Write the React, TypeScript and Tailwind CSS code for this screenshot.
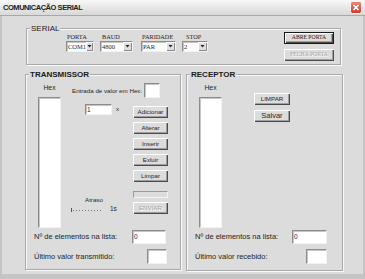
import type { ReactNode } from 'react';

const etched = 'border border-[#a9a9a9] shadow-[inset_1px_1px_0_#fafafa,1px_1px_0_#fafafa]';
const sunken =
  'bg-white border border-t-[#8c8c8c] border-l-[#8c8c8c] border-r-[#f2f2f2] border-b-[#f2f2f2] shadow-[inset_1px_1px_0_#c6c6c6]';
const raised = 'shadow-[inset_1px_1px_0_#ffffff,inset_-1px_-1px_0_#4a4a4a,inset_-2px_-2px_0_#a0a0a0]';

function Btn({
  children,
  className = '',
  disabled = false,
  isDefault = false,
}: {
  children: ReactNode;
  className?: string;
  disabled?: boolean;
  isDefault?: boolean;
}) {
  return (
    <button
      type="button"
      className={`flex items-center justify-center bg-[#dcdcdc] leading-none ${raised} ${
        isDefault ? 'border border-[#1a1a1a]' : ''
      } ${disabled ? 'text-[#a6a6a6] [text-shadow:1px_1px_0_#ffffff]' : 'text-[#1e1e1e]'} ${className}`}
    >
      {children}
    </button>
  );
}

function Combo({ value, w }: { value: string; w: string }) {
  return (
    <div className={`flex h-[11px] ${w} ${sunken}`}>
      <span className="flex-1 pl-[1px] text-[6.5px] leading-[9px]">{value}</span>
      <span className="w-[9px] bg-[#dedede] flex items-center justify-center shadow-[inset_1px_1px_0_#ffffff,inset_-1px_-1px_0_#8a8a8a]">
        <svg width="5" height="3" viewBox="0 0 5 3">
          <path d="M0.5 0h4L2.5 2.5z" fill="#222" />
        </svg>
      </span>
    </div>
  );
}

function Legend({ children, className = '' }: { children: ReactNode; className?: string }) {
  return (
    <span
      className={`absolute -top-[5px] px-[1px] bg-[#dcdcdc] text-[8px] leading-[10px] font-bold text-[#1a1a1a] ${className}`}
    >
      {children}
    </span>
  );
}

function HexList() {
  return (
    <div className="ml-[12px] w-[23px] flex flex-col">
      <span className="mt-[8px] h-[10px] leading-[10px] text-[6.8px] text-center">Hex</span>
      <div className={`mt-[4px] h-[131px] ${sunken}`} />
    </div>
  );
}

export default function App() {
  return (
    <div className="w-[365px] h-[279px] flex flex-col bg-[#dcdcdc] overflow-hidden font-['Liberation_Sans',Arial,sans-serif] text-[#1e1e1e]">
      {/* barra de titulo */}
      <div className="h-[16px] flex items-center justify-between border-b border-[#a8a8a8] bg-linear-to-b from-[#f8f8f8] to-[#d8d8d8] pl-[3px] pr-[3px]">
        <span className="text-[7.5px] font-bold tracking-[-0.45px] text-[#202020]">COMUNICAÇÃO SERIAL</span>
        <svg width="12" height="13" viewBox="0 0 12 13">
          <defs>
            <linearGradient id="cl" x1="0" y1="0" x2="0" y2="1">
              <stop offset="0" stopColor="#ec8a78" />
              <stop offset="1" stopColor="#c8392a" />
            </linearGradient>
          </defs>
          <rect x="0.5" y="0.5" width="11" height="12" rx="2" fill="url(#cl)" stroke="#f4f4f4" />
          <path d="M3.5 4l5 5M8.5 4l-5 5" stroke="#fff" strokeWidth="1.6" />
        </svg>
      </div>

      <div className="flex-1 border-l-2 border-r-2 border-b-[5px] border-[#c4c4c4]">
        {/* SERIAL */}
        <div className={`relative mt-[12px] ml-[24px] w-[315px] h-[37px] flex ${etched}`}>
          <Legend className="left-[3px] -top-[4px] font-normal text-[8.5px]">SERIAL</Legend>
          <div className="ml-[39px] pt-[4px] flex font-['Liberation_Serif',serif] text-[6.3px]">
            <div className="flex flex-col w-[28px]">
              <span className="pl-[1px] h-[7px] leading-[7px]">PORTA</span>
              <div className="mt-[1px]">
                <Combo value="COM1" w="w-[28px]" />
              </div>
            </div>
            <div className="flex flex-col w-[33px] ml-[6px]">
              <span className="pl-[2px] h-[7px] leading-[7px]">BAUD</span>
              <div className="mt-[1px]">
                <Combo value="4800" w="w-[33px]" />
              </div>
            </div>
            <div className="flex flex-col w-[35px] ml-[8px]">
              <span className="pl-[1px] h-[7px] leading-[7px]">PARIDADE</span>
              <div className="mt-[1px]">
                <Combo value="PAR" w="w-[35px]" />
              </div>
            </div>
            <div className="flex flex-col w-[26px] ml-[6px]">
              <span className="pl-[4px] h-[7px] leading-[7px]">STOP</span>
              <div className="mt-[1px]">
                <Combo value="2" w="w-[26px]" />
              </div>
            </div>
          </div>
          <div className="ml-[76px] pt-[3px] flex flex-col gap-[5px] font-['Liberation_Serif',serif] text-[5.7px]">
            <Btn isDefault className="w-[50px] h-[12px]">ABRE PORTA</Btn>
            <Btn disabled className="w-[50px] h-[12px]">FECHA PORTA</Btn>
          </div>
        </div>

        <div className="mt-[9px] ml-[23px] flex gap-[5px]">
          {/* TRANSMISSOR */}
          <div className={`relative w-[156px] h-[196px] flex flex-col ${etched}`}>
            <Legend className="left-[3px]">TRANSMISSOR</Legend>
            <div className="flex h-[153px]">
              <HexList />
              <div className="flex flex-col">
                <div className="mt-[8px] flex items-center pl-[11px]">
                  <span className="text-[6.2px]">Entrada de valor em Hex:</span>
                  <div className={`ml-[2px] w-[16px] h-[15px] ${sunken}`} />
                </div>
                <div className="flex">
                  <div className="w-[72px] flex flex-col">
                    <div className="mt-[6px] ml-[24px] flex items-center">
                      <div className={`w-[27px] h-[11px] pl-[1px] text-[6.5px] leading-[9px] ${sunken}`}>1</div>
                      <span className="ml-[4px] text-[6px]">x</span>
                    </div>
                    <span className="mt-[81px] ml-[24px] text-[6.2px] leading-[8px]">Atraso</span>
                    <div className="ml-[10px] mt-[1px] flex items-center">
                      <svg width="32" height="5" viewBox="0 0 32 5">
                        <line x1="0.5" y1="1" x2="0.5" y2="5" stroke="#555" />
                        <line x1="2" y1="3.5" x2="32" y2="3.5" stroke="#777" strokeDasharray="1 2" />
                      </svg>
                      <span className="ml-[7px] text-[6.5px] leading-[8px]">1s</span>
                    </div>
                  </div>
                  <div className="w-[35px] pt-[8px] flex flex-col text-[6.2px]">
                    <div className="flex flex-col gap-[4px]">
                      <Btn className="w-[35px] h-[12px]">Adicionar</Btn>
                      <Btn className="w-[35px] h-[12px]">Alterar</Btn>
                      <Btn className="w-[35px] h-[12px]">Inserir</Btn>
                      <Btn className="w-[35px] h-[12px]">Exluir</Btn>
                      <Btn className="w-[35px] h-[12px]">Limpar</Btn>
                    </div>
                    <div className="mt-[9px] h-[7px] border border-t-[#9a9a9a] border-l-[#9a9a9a] border-r-[#f4f4f4] border-b-[#f4f4f4]" />
                    <Btn disabled className="mt-[4px] w-[35px] h-[12px]">ENVIAR</Btn>
                  </div>
                </div>
              </div>
            </div>
            <div className="mt-[2px] flex items-center pl-[8px] text-[7.5px]">
              <span className="w-[98px]">Nº de elementos na lista:</span>
              <div className={`w-[34px] h-[14px] pl-[1px] text-[6.5px] leading-[11px] ${sunken}`}>0</div>
            </div>
            <div className="mt-[5px] flex items-center pl-[8px] text-[7.5px]">
              <span className="w-[113px]">Último valor transmitido:</span>
              <div className={`w-[20px] h-[15px] ${sunken}`} />
            </div>
          </div>

          {/* RECEPTOR */}
          <div className={`relative w-[157px] h-[197px] flex flex-col ${etched}`}>
            <Legend className="left-[3px]">RECEPTOR</Legend>
            <div className="flex h-[153px]">
              <HexList />
              <div className="ml-[32px] mt-[18px] w-[36px] flex flex-col gap-[5px]">
                <Btn className="w-[36px] h-[12px] text-[6.2px]">LIMPAR</Btn>
                <Btn className="w-[36px] h-[12px] text-[7.5px]">Salvar</Btn>
              </div>
            </div>
            <div className="mt-[2px] flex items-center pl-[8px] text-[7.5px]">
              <span className="w-[97px]">Nº de elementos na lista:</span>
              <div className={`w-[35px] h-[14px] pl-[1px] text-[6.5px] leading-[11px] ${sunken}`}>0</div>
            </div>
            <div className="mt-[5px] flex items-center pl-[8px] text-[7.5px]">
              <span className="w-[111px]">Último valor recebido:</span>
              <div className={`w-[21px] h-[15px] ${sunken}`} />
            </div>
          </div>
        </div>
      </div>
    </div>
  );
}
